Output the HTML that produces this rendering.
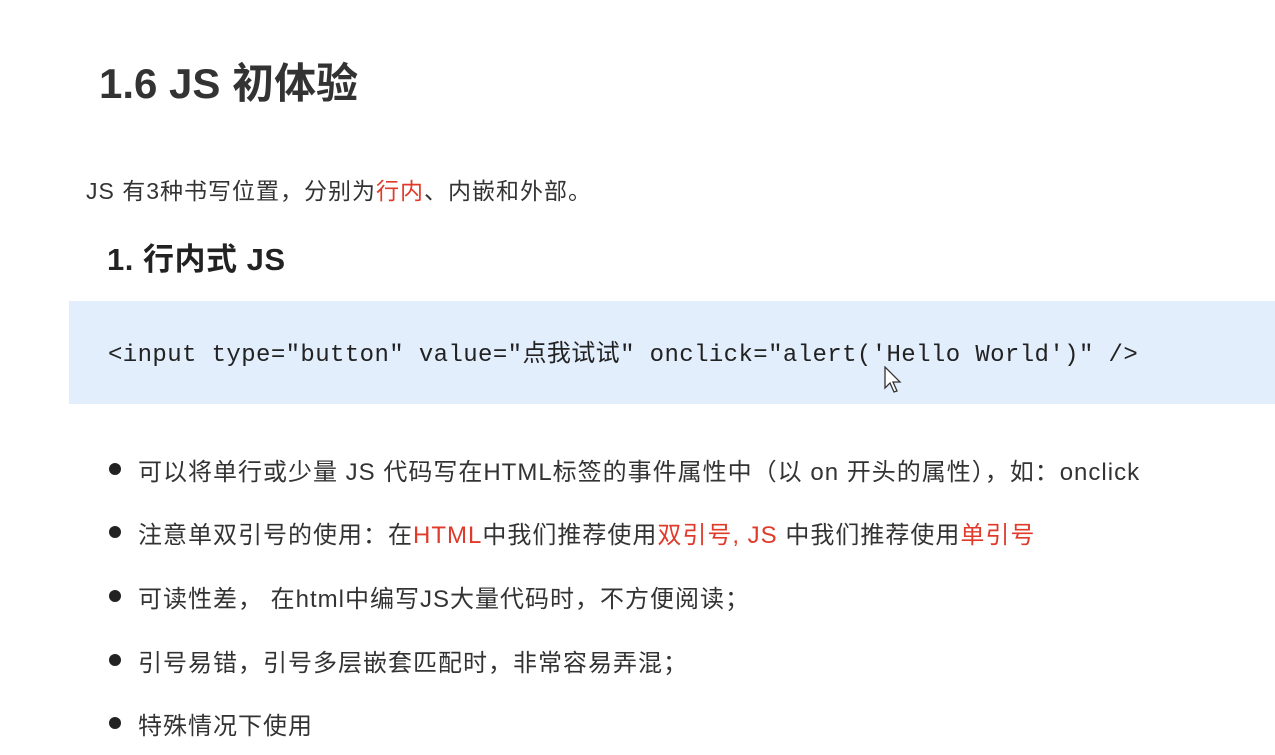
<!DOCTYPE html>
<html><head><meta charset="utf-8"><style>
body{margin:0;width:1275px;height:755px;background:#fff;overflow:hidden;position:relative;font-family:"Liberation Sans","Noto Sans CJK SC",sans-serif;color:#333}
.a{position:absolute;white-space:nowrap}
.r{color:#e03a2a}
h1{position:absolute;left:99px;top:50px;margin:0;font-size:42px;font-weight:bold;color:#333;letter-spacing:0}
h2{position:absolute;left:107px;top:234px;margin:0;font-size:31px;font-weight:bold;color:#222;letter-spacing:0.5px}
.code{position:absolute;left:69px;top:301px;width:1206px;height:103px;background:#e3eefc}
.code span{position:absolute;left:39px;top:32px;font-family:"Liberation Mono","Noto Sans CJK SC",monospace;font-size:24px;color:#222;white-space:nowrap;letter-spacing:0.4px}
.li{position:absolute;left:138px;font-size:24px;letter-spacing:1px;white-space:nowrap}
.li:before{content:"";position:absolute;left:-29px;top:11px;width:12px;height:12px;border-radius:50%;background:#222}
</style></head><body>
<h1>1.6 JS 初体验</h1>
<div class="a" style="left:86px;top:172px;font-size:23px;letter-spacing:1px">JS 有3种书写位置，分别为<span class="r">行内</span>、内嵌和外部。</div>
<h2>1. 行内式 JS</h2>
<div class="code"><span>&lt;input type="button" value="点我试试" onclick="alert('Hello World')" /&gt;</span></div>
<div class="li" style="top:452px">可以将单行或少量 JS 代码写在HTML标签的事件属性中（以 on 开头的属性），如：onclick</div>
<div class="li" style="top:515px">注意单双引号的使用：在<span class="r">HTML</span>中我们推荐使用<span class="r">双引号, JS</span> 中我们推荐使用<span class="r">单引号</span></div>
<div class="li" style="top:579px">可读性差， 在html中编写JS大量代码时，不方便阅读；</div>
<div class="li" style="top:643px">引号易错，引号多层嵌套匹配时，非常容易弄混；</div>
<div class="li" style="top:706px">特殊情况下使用</div>
<svg class="a" style="left:884px;top:366px" width="20" height="30" viewBox="0 0 20 30"><path d="M1 1 L1 22 L6 17 L10 26 L13 25 L9 16 L16 16 Z" fill="#fff" stroke="#333" stroke-width="1.3"/></svg>
</body></html>
